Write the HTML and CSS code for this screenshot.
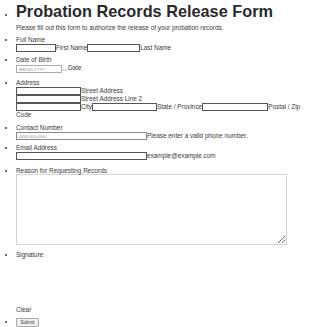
FILE: index.html
```html
<!DOCTYPE html>
<html>
<head>
<meta charset="utf-8">
<link rel="stylesheet" href="styles.css">
</head>
<body>
<ul class="form">
  <li class="head">
    <h1 class="title">Probation Records Release Form</h1>
    <p class="intro">Please fill out this form to authorize the release of your probation records.</p>
  </li>
  <li class="field">
    <div class="label">Full Name</div>
    <div class="row"><input class="in w40" type="text"><span>First Name</span><input class="in w53" type="text"><span>Last Name</span></div>
  </li>
  <li class="field dob">
    <div class="label">Date of Birth</div>
    <div class="row"><input class="in date" type="text" placeholder="MM-DD-YYYY"><span class="cal"></span><span>Date</span></div>
  </li>
  <li class="field addr">
    <div class="label">Address</div>
    <div class="row"><input class="in w65" type="text"><span>Street Address</span></div>
    <div class="row"><input class="in w65" type="text"><span>Street Address Line 2</span></div>
    <div class="row wrap"><input class="in w65" type="text"><span>City</span><input class="in w65" type="text"><span>State / Province</span><input class="in w66" type="text"><span>Postal / Zip Code</span></div>
  </li>
  <li class="field">
    <div class="label">Contact Number</div>
    <div class="row"><input class="in w131 ph" type="text" placeholder="(000) 000-0000"><span>Please enter a valid phone number.</span></div>
  </li>
  <li class="field email">
    <div class="label">Email Address</div>
    <div class="row"><input class="in w131" type="text"><span>example@example.com</span></div>
  </li>
  <li class="field reason">
    <div class="label">Reason for Requesting Records</div>
    <textarea class="area"></textarea>
  </li>
  <li class="field sig">
    <div class="label">Signature</div>
    <div class="pad"></div>
    <div class="clear">Clear</div>
  </li>
  <li class="field">
    <button class="submit" type="button">Submit</button>
  </li>
</ul>
</body>
</html>
```
FILE: styles.css
```css
html, body {
  margin: 0;
  padding: 0;
  background: #fff;
}
body {
  font-family: "Liberation Sans", Arial, sans-serif;
  font-size: 6.4px;
  color: #3a3a3a;
}
.form {
  margin: 0;
  padding: 0 5px 0 16px;
  list-style: disc;
}
.head {
  padding-top: 2px;
}
.title {
  margin: 0;
  font-size: 16.3px;
  line-height: 18px;
  font-weight: bold;
  color: #2a2a2a;
}
.intro {
  margin: 4px 0 4px;
  line-height: 8px;
}
.field {
  margin-bottom: 4px;
  line-height: 8px;
}
.field.dob {
  margin-bottom: 6px;
}
.field.addr {
  margin-bottom: 5px;
}
.field.email {
  margin-bottom: 7px;
}
.field.reason {
  margin-bottom: 6px;
}
.label {
  line-height: 8px;
  height: 8px;
}
.row {
  line-height: 8px;
  white-space: nowrap;
}
.row.wrap {
  white-space: normal;
}
.in {
  box-sizing: border-box;
  height: 8px;
  margin: 0;
  padding: 0 2px;
  border: 1px solid #555;
  font: 4px "Liberation Sans", Arial, sans-serif;
  vertical-align: top;
  background: #fff;
}
.in::placeholder {
  color: #8a8a8a;
}
.w40 { width: 40px; }
.w53 { width: 53px; }
.w65 { width: 65px; }
.w66 { width: 66px; }
.w131 { width: 131px; }
.date {
  width: 46px;
  border-color: #aaa;
  margin-top: 1px;
}
.ph {
  border-color: #888;
}
.cal {
  display: inline-block;
  width: 4px;
  height: 2px;
  margin: 5px 1px 0 1px;
  border: 1px solid #c8c8c8;
  border-top: none;
  vertical-align: top;
  box-sizing: border-box;
}
.area {
  display: block;
  box-sizing: border-box;
  width: 271px;
  height: 71px;
  margin: -1px 0 0;
  border: 1px solid #d4d4d4;
  padding: 2px;
  resize: both;
}
.sig .pad {
  height: 47px;
}
.clear {
  line-height: 8px;
  margin-bottom: 3px;
}
.submit {
  box-sizing: border-box;
  height: 9px;
  width: 23px;
  margin: 0;
  padding: 0;
  font: 4.5px "Liberation Sans", Arial, sans-serif;
  color: #333;
  background: #f0f0f0;
  border: 1px solid #aaa;
  border-radius: 1px;
  vertical-align: top;
}
```
